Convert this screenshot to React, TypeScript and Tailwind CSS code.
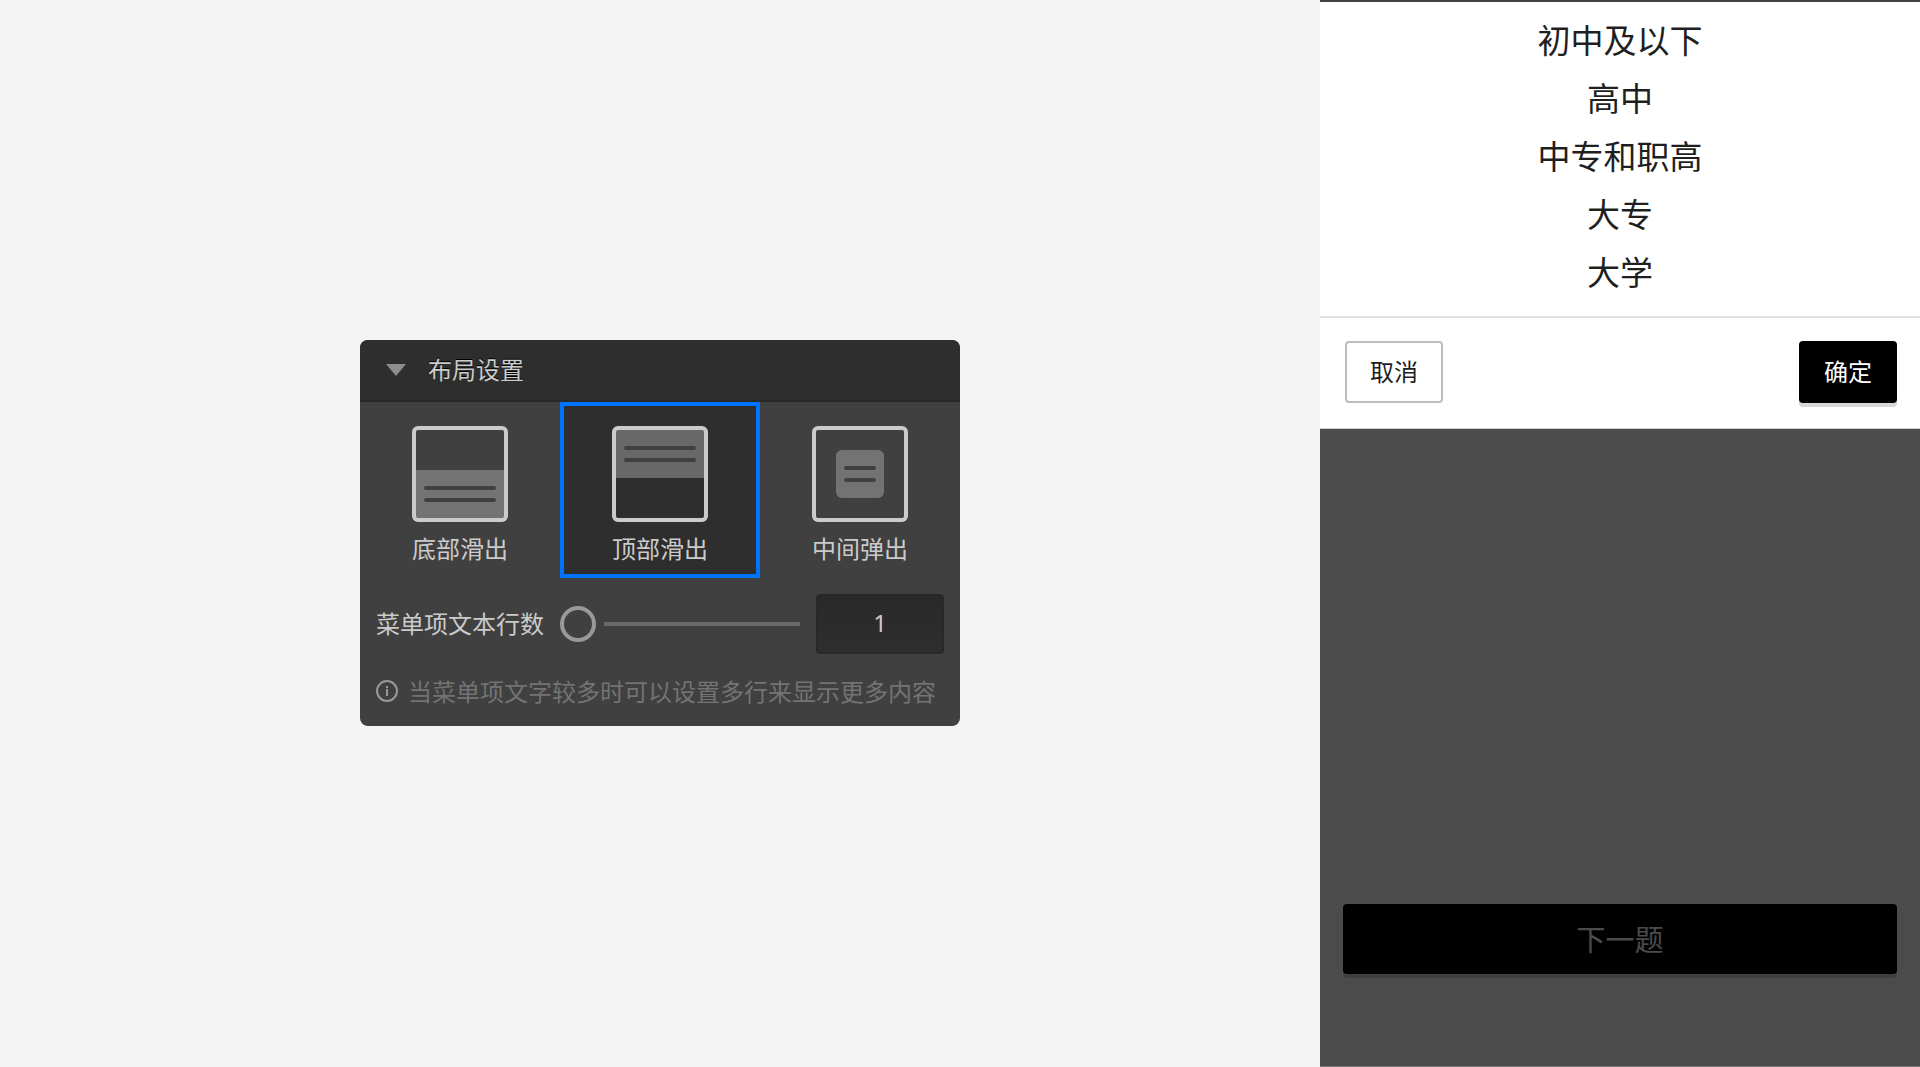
import { useState } from "react";

const LEVELS = ["初中及以下", "高中", "中专和职高", "大专", "大学"];

function IconFrame({ children }: { children: React.ReactNode }) {
  return (
    <svg viewBox="0 0 96 96" className="size-24" aria-hidden="true">
      {children}
      <rect x="2" y="2" width="92" height="92" rx="4" fill="none" stroke="#cbcbcb" strokeWidth="4" />
    </svg>
  );
}

function BottomIcon() {
  return (
    <IconFrame>
      <rect x="4" y="44" width="88" height="48" fill="#737373" />
      <rect x="12" y="60" width="72" height="4" rx="2" fill="#404040" />
      <rect x="12" y="72" width="72" height="4" rx="2" fill="#404040" />
    </IconFrame>
  );
}

function TopIcon() {
  return (
    <IconFrame>
      <rect x="4" y="4" width="88" height="48" fill="#686868" />
      <rect x="12" y="20" width="72" height="4" rx="2" fill="#404040" />
      <rect x="12" y="32" width="72" height="4" rx="2" fill="#404040" />
    </IconFrame>
  );
}

function CenterIcon() {
  return (
    <IconFrame>
      <rect x="24" y="24" width="48" height="48" rx="6" fill="#737373" />
      <rect x="32" y="40" width="32" height="4" rx="2" fill="#404040" />
      <rect x="32" y="52" width="32" height="4" rx="2" fill="#404040" />
    </IconFrame>
  );
}

const LAYOUTS = [
  { id: "bottom", label: "底部滑出", Icon: BottomIcon },
  { id: "top", label: "顶部滑出", Icon: TopIcon },
  { id: "center", label: "中间弹出", Icon: CenterIcon },
];

function SettingsPanel() {
  const [layout, setLayout] = useState("top");
  const [lines, setLines] = useState(1);

  return (
    <section className="w-full max-w-[600px] overflow-hidden rounded-lg bg-[#404040] text-2xl text-[#cbcbcb]">
      <button
        type="button"
        className="flex w-full items-center gap-[22px] border-b-2 border-[#282828] bg-[#2e2e2e] pl-[26px] text-left [text-shadow:0_-1px_0_#000]"
      >
        <svg viewBox="0 0 20 12" className="h-3 w-5" aria-hidden="true">
          <path d="M0 0h20L10 12z" fill="#8e8e8e" />
        </svg>
        <span className="pb-0.5 leading-[58px]">布局设置</span>
      </button>

      <div role="radiogroup" aria-label="布局设置" className="grid grid-cols-3">
        {LAYOUTS.map(({ id, label, Icon }) => (
          <label
            key={id}
            className="relative flex cursor-pointer flex-col items-center border-4 border-transparent pt-5 pb-2 has-checked:border-[#0073ff] has-checked:bg-[#2e2e2e]"
          >
            <input
              type="radio"
              name="layout"
              className="sr-only"
              checked={layout === id}
              onChange={() => setLayout(id)}
            />
            <Icon />
            <span className="pt-2 leading-9">{label}</span>
          </label>
        ))}
      </div>

      <div className="flex items-center gap-4 px-4 pt-4">
        <label htmlFor="lines" className="pb-0.5">
          菜单项文本行数
        </label>
        <input
          id="lines"
          type="range"
          min={1}
          max={5}
          value={lines}
          onChange={(e) => setLines(Number(e.target.value))}
          className="h-9 min-w-0 flex-1 appearance-none bg-transparent [&::-webkit-slider-runnable-track]:h-1 [&::-webkit-slider-runnable-track]:bg-[#696969] [&::-webkit-slider-thumb]:-mt-4 [&::-webkit-slider-thumb]:size-9 [&::-webkit-slider-thumb]:appearance-none [&::-webkit-slider-thumb]:rounded-full [&::-webkit-slider-thumb]:border-4 [&::-webkit-slider-thumb]:border-[#999999] [&::-webkit-slider-thumb]:bg-[#404040] [&::-webkit-slider-thumb]:shadow-[0_0_0_8px_#404040]"
        />
        <input
          type="text"
          aria-label="行数"
          value={lines}
          onChange={(e) => setLines(Number(e.target.value) || 1)}
          className="h-[60px] w-32 rounded-sm border-2 border-[#282828] bg-linear-to-b from-[#292929] to-[#2e2e2e] pb-0.5 text-center font-['Noto_Sans',sans-serif]"
        />
      </div>

      <p className="flex items-center gap-2.5 px-4 pt-[18px] pb-4 leading-[38px] whitespace-nowrap text-[#737373]">
        <svg viewBox="0 0 22 22" className="size-[22px] shrink-0" aria-hidden="true">
          <circle cx="11" cy="11" r="10" fill="none" stroke="#989898" strokeWidth="2" />
          <rect x="10" y="6" width="2" height="2" fill="#989898" />
          <rect x="10" y="9" width="2" height="7" fill="#989898" />
        </svg>
        当菜单项文字较多时可以设置多行来显示更多内容
      </p>
    </section>
  );
}

function Preview() {
  return (
    <section className="flex w-[31.25%] min-w-[400px] flex-col border-t-2 border-b border-t-[#454345] border-b-[#7a7a7a] bg-[#4b4b4b] text-2xl text-[#1f1f1f]">
      <div className="border-b border-[#cfcfcf] bg-white">
        <ul className="border-b-2 border-[#e0e0e0] pt-2 pb-4">
          {LEVELS.map((level) => (
            <li key={level}>
              <button type="button" className="w-full text-center text-[33px] leading-[58px]">
                {level}
              </button>
            </li>
          ))}
        </ul>
        <div className="flex justify-between pt-[23px] pr-[23px] pb-[25px] pl-[25px]">
          <button type="button" className="h-[62px] rounded-sm border-2 border-[#bdbdbd] px-[23px] pb-0.5">
            取消
          </button>
          <button
            type="button"
            className="h-[62px] rounded-sm bg-black px-[25px] pb-0.5 text-white shadow-[0_4px_0_#d8d6d8]"
          >
            确定
          </button>
        </div>
      </div>
      <div className="mt-auto px-[23px] pb-[92px]">
        <button
          type="button"
          className="h-[70px] w-full rounded-sm bg-black pb-0.5 text-[29px] text-[#4b4b4b] shadow-[0_4px_0_#404040]"
        >
          下一题
        </button>
      </div>
    </section>
  );
}

export default function App() {
  return (
    <main className="flex min-h-screen bg-[#f4f4f4] font-['Noto_Sans_CJK_SC',sans-serif] font-normal">
      <div className="flex min-w-0 flex-1 items-center justify-center pb-0.5">
        <SettingsPanel />
      </div>
      <Preview />
    </main>
  );
}
